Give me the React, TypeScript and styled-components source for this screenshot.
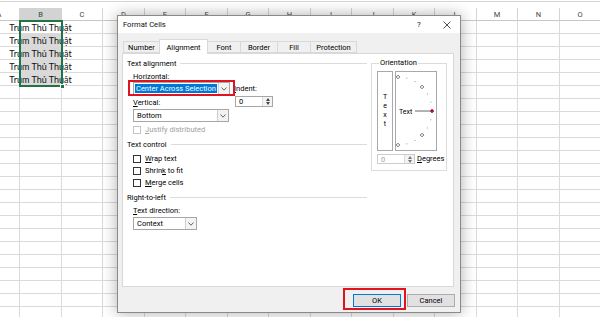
import React from 'react';
import styled, { createGlobalStyle } from 'styled-components';

const Global = createGlobalStyle`
  html, body { margin: 0; padding: 0; background: #fff; }
  body { width: 600px; height: 317px; overflow: hidden; }
  #root { width: 600px; height: 317px; }
  * { box-sizing: border-box; }
`;

const UI = `"Roboto", "Noto Sans", sans-serif`;
const CELLFONT = `"Lato", "Liberation Sans", sans-serif`;

const widths = [41, 42, 41, 42, 41, 42, 41, 42, 41, 42, 41, 42, 41, 42, 41];
const letters = 'ABCDEFGHIJKLMNO'.split('');
const ROWS = 23;

const Screen = styled.div`
  position: relative;
  width: 600px;
  height: 317px;
  overflow: hidden;
  background: #fff;
  font-family: ${UI};
`;

const TopStrip = styled.div`
  height: 8px;
  background: linear-gradient(#fff 0 1px, #d6d6d6 1px 2px, #fff 2px);
`;

const Sheet = styled.div`
  display: grid;
  grid-template-columns: ${widths.map((w) => `${w}px`).join(' ')};
  grid-auto-rows: 13px;
  margin-left: -21px;
`;

const HeaderCell = styled.div<{ $sel?: boolean }>`
  display: flex;
  align-items: center;
  justify-content: center;
  font-family: ${UI};
  font-size: 7.5px;
  color: ${(p) => (p.$sel ? '#1d4f30' : '#444')};
  background: ${(p) => (p.$sel ? '#d3d3d3' : '#fff')};
  border-right: 1px solid #d4d4d4;
  border-bottom: ${(p) => (p.$sel ? '1px solid #217346' : '1px solid #c6c6c6')};
`;

const Cell = styled.div<{ $sel?: boolean }>`
  position: relative;
  display: flex;
  align-items: center;
  justify-content: center;
  white-space: nowrap;
  font-family: ${CELLFONT};
  font-size: 9px;
  color: #111;
  background: ${(p) => (p.$sel ? '#d9d9d9' : 'transparent')};
  border-right: 1px solid #dadada;
  border-bottom: 1px solid #dadada;
`;

const Selection = styled.div`
  position: absolute;
  left: -1px;
  top: -1px;
  width: 44px;
  height: 67px;
  border: 2px solid #217346;
  pointer-events: none;
  z-index: 2;
`;

const FillHandle = styled.span`
  position: absolute;
  right: -4px;
  bottom: -4px;
  width: 5px;
  height: 5px;
  background: #217346;
  border: 1px solid #fff;
`;

/* ---------- Dialog ---------- */

const Dialog = styled.div`
  position: absolute;
  left: 117px;
  top: 15px;
  width: 344px;
  height: 298px;
  background: #f0f0f0;
  border: 1px solid #8a8a8a;
  box-shadow: 0 0 14px rgba(0, 0, 0, 0.32);
  display: flex;
  flex-direction: column;
  font-family: ${UI};
  font-size: 7.5px;
  color: #000;
`;

const TitleBar = styled.div`
  height: 17px;
  background: #fff;
  display: flex;
  align-items: center;
  padding: 0 6px 0 5px;
`;

const Title = styled.span`
  flex: 1;
  font-size: 7.6px;
  color: #111;
`;

const TitleBtn = styled.span<{ $w: number }>`
  width: ${(p) => p.$w}px;
  display: flex;
  align-items: center;
  justify-content: center;
  font-size: 8px;
  color: #222;
`;

const Body = styled.div`
  flex: 1;
  display: flex;
  flex-direction: column;
  padding: 6px 6px 0 4px;
`;

const TabRow = styled.div`
  height: 14px;
  display: flex;
  align-items: flex-end;
  padding-left: 1px;
  position: relative;
  z-index: 1;
`;

const Tab = styled.div<{ $w: number; $active?: boolean }>`
  width: ${(p) => p.$w}px;
  height: ${(p) => (p.$active ? 15 : 12)}px;
  margin-bottom: ${(p) => (p.$active ? -1 : 0)}px;
  display: flex;
  align-items: center;
  justify-content: center;
  background: ${(p) => (p.$active ? '#fff' : '#f0f0f0')};
  border: 1px solid #d9d9d9;
  border-bottom: ${(p) => (p.$active ? 'none' : '1px solid #d9d9d9')};
  margin-right: -1px;
  font-size: 7.5px;
`;

const Panel = styled.div`
  height: 234px;
  background: #fff;
  border: 1px solid #d9d9d9;
  display: flex;
  gap: 4px;
  padding: 4px 0 0 4px;
`;

const LeftCol = styled.div`
  width: 240px;
  display: grid;
  grid-template-rows: 10px 14px 13px 13px 14px 15px 15px 13px 12px 12px 16px 12px 13px;
`;

const GroupHeader = styled.div`
  display: flex;
  align-items: center;
  white-space: nowrap;
`;

const GroupLine = styled.span`
  flex: 1;
  height: 1px;
  background: #dcdcdc;
  margin-left: 4px;
`;

const Line = styled.div<{ $align?: string }>`
  display: flex;
  align-items: ${(p) => p.$align || 'center'};
  padding-left: 6px;
  white-space: nowrap;
`;

const Label = styled.span<{ $w?: number; $disabled?: boolean; $ml?: number }>`
  ${(p) => (p.$w ? `flex: 0 0 ${p.$w}px;` : '')}
  margin-left: ${(p) => p.$ml || 0}px;
  color: ${(p) => (p.$disabled ? '#a0a0a0' : '#000')};
  line-height: 10px;
`;

const ComboWrap = styled.div`
  position: relative;
  display: flex;
`;

const ComboBox = styled.div<{ $w: number }>`
  width: ${(p) => p.$w}px;
  height: 13px;
  border: 1px solid #a6a6a6;
  background: #fff;
  display: flex;
`;

const ComboText = styled.span<{ $hl?: boolean }>`
  flex: 1;
  display: flex;
  align-items: center;
  margin: 1px;
  padding-left: ${(p) => (p.$hl ? 1 : 2)}px;
  background: ${(p) => (p.$hl ? '#0078d7' : 'transparent')};
  color: ${(p) => (p.$hl ? '#fff' : '#000')};
`;

const ComboArrow = styled.span`
  width: 11px;
  border-left: 1px solid #cfcfcf;
  background: #f3f3f3;
  display: flex;
  align-items: center;
  justify-content: center;
`;

const RedMark = styled.span<{ $l: number; $t: number; $w: number; $h: number }>`
  position: absolute;
  left: ${(p) => p.$l}px;
  top: ${(p) => p.$t}px;
  width: ${(p) => p.$w}px;
  height: ${(p) => p.$h}px;
  border: 2px solid #e0141e;
  pointer-events: none;
  z-index: 3;
`;

const Spinner = styled.div<{ $disabled?: boolean }>`
  width: 38px;
  height: ${(p) => (p.$disabled ? 10 : 11)}px;
  border: 1px solid ${(p) => (p.$disabled ? '#cccccc' : '#a6a6a6')};
  background: #fff;
  display: flex;
  color: ${(p) => (p.$disabled ? '#a0a0a0' : '#000')};
`;

const SpinField = styled.span`
  flex: 1;
  display: flex;
  align-items: center;
  padding-left: 3px;
`;

const SpinButtons = styled.span`
  width: 10px;
  display: flex;
  flex-direction: column;
  border-left: 1px solid #dcdcdc;
`;

const SpinHalf = styled.span`
  flex: 1;
  display: flex;
  align-items: center;
  justify-content: center;
  background: #f3f3f3;
`;

const CheckBox = styled.span<{ $disabled?: boolean }>`
  width: 8px;
  height: 8px;
  border: 1px solid ${(p) => (p.$disabled ? '#c4c4c4' : '#333')};
  background: #fff;
  margin-right: 4px;
  flex: 0 0 8px;
`;

const Orientation = styled.fieldset`
  width: 76px;
  height: 113px;
  margin: 0;
  padding: 3px 0 0 5px;
  border: 1px solid #dcdcdc;
  min-width: 0;
  & > legend {
    padding: 0 1px;
    margin-left: 2px;
    line-height: 10px;
    font-size: 7.5px;
  }
`;

const OrientRow = styled.div`
  display: flex;
  gap: 2px;
`;

const VertTextBox = styled.div`
  width: 16px;
  height: 80px;
  border: 1px solid #a9a9a9;
  display: flex;
  flex-direction: column;
  align-items: center;
  justify-content: center;
  line-height: 9px;
  font-size: 7px;
`;

const DialBox = styled.div`
  width: 42px;
  height: 80px;
  border: 1px solid #a9a9a9;
  display: flex;
`;

const DegreesRow = styled.div`
  display: flex;
  align-items: center;
  margin-top: 3px;
  gap: 2px;
`;

const Footer = styled.div`
  flex: 1;
  display: flex;
  justify-content: flex-end;
  align-items: flex-start;
  gap: 6px;
  padding: 7px 5px 0 0;
  margin-right: -6px;
`;

const Button = styled.button<{ $default?: boolean }>`
  position: relative;
  width: 48px;
  height: 13px;
  padding: 0;
  font-family: ${UI};
  font-size: 7.5px;
  color: #000;
  background: #e1e1e1;
  border: 1px solid ${(p) => (p.$default ? '#0078d7' : '#adadad')};
  display: flex;
  align-items: center;
  justify-content: center;
`;

const Chevron = () => (
  <svg width="6" height="4" viewBox="0 0 6 4">
    <polyline points="0.5,0.5 3,3.2 5.5,0.5" fill="none" stroke="#555" strokeWidth="0.9" />
  </svg>
);

const Tri = ({ up, color = '#444' }: { up?: boolean; color?: string }) => (
  <svg width="4" height="3" viewBox="0 0 4 3">
    <polygon points={up ? '0,3 4,3 2,0' : '0,0 4,0 2,3'} fill={color} />
  </svg>
);

const CloseIcon = () => (
  <svg width="8" height="8" viewBox="0 0 8 8">
    <path d="M0.5 0.5 L7.5 7.5 M7.5 0.5 L0.5 7.5" stroke="#222" strokeWidth="0.8" />
  </svg>
);

const Dial = () => {
  const cx = 2;
  const cy = 39;
  const r = 34;
  const pt = (deg: number) => {
    const a = (deg * Math.PI) / 180;
    return [cx + r * Math.cos(a), cy - r * Math.sin(a)];
  };
  const diamond = (x: number, y: number, s: number) =>
    `${x},${y - s} ${x + s},${y} ${x},${y + s} ${x - s},${y}`;
  return (
    <svg width="40" height="78" viewBox="0 0 40 78">
      {[75, 60, 30, 15, -15, -30, -60, -75].map((d) => {
        const [x, y] = pt(d);
        return <rect key={d} x={x - 0.5} y={y - 0.5} width="1" height="1" fill="#9a9a9a" />;
      })}
      {[90, 45, -45, -90].map((d) => {
        const [x, y] = pt(d);
        return <polygon key={d} points={diamond(x, y, 1.8)} fill="#fff" stroke="#333" strokeWidth="0.7" />;
      })}
      <text x="3" y="41.6" fontSize="7" fontFamily="Roboto, sans-serif" fill="#000">
        Text
      </text>
      <line x1="19" y1="39" x2="34" y2="39" stroke="#666" strokeWidth="1" />
      <polygon points={diamond(36, 39, 2)} fill="#b0142a" stroke="#8a0f20" strokeWidth="0.5" />
    </svg>
  );
};

export default function App() {
  const tabs = [
    { t: 'Number', w: 37 },
    { t: 'Alignment', w: 49, active: true },
    { t: 'Font', w: 34 },
    { t: 'Border', w: 38 },
    { t: 'Fill', w: 34 },
    { t: 'Protection', w: 47 },
  ];

  const cells: React.ReactNode[] = [];
  letters.forEach((l, j) => {
    cells.push(
      <HeaderCell key={`h${j}`} $sel={j === 1}>
        {l}
      </HeaderCell>
    );
  });
  for (let i = 0; i < ROWS; i++) {
    letters.forEach((_, j) => {
      const inB = j === 1 && i < 5;
      cells.push(
        <Cell key={`c${i}-${j}`} $sel={j === 1 && i >= 1 && i <= 4}>
          {inB ? 'Trum Thủ Thuật' : null}
          {j === 1 && i === 0 ? (
            <Selection>
              <FillHandle />
            </Selection>
          ) : null}
        </Cell>
      );
    });
  }

  return (
    <Screen>
      <Global />
      <TopStrip />
      <Sheet>{cells}</Sheet>

      <Dialog>
        <TitleBar>
          <Title>Format Cells</Title>
          <TitleBtn $w={14}>?</TitleBtn>
          <TitleBtn $w={14} style={{ marginLeft: 14 }}>
            <CloseIcon />
          </TitleBtn>
        </TitleBar>
        <Body>
          <TabRow>
            {tabs.map((t) => (
              <Tab key={t.t} $w={t.w} $active={t.active}>
                {t.t}
              </Tab>
            ))}
          </TabRow>
          <Panel>
            <LeftCol>
              <GroupHeader>
                Text alignment
                <GroupLine />
              </GroupHeader>
              <Line $align="flex-end">
                <Label>
                  <u>H</u>orizontal:
                </Label>
              </Line>
              <Line>
                <ComboWrap>
                  <ComboBox $w={97}>
                    <ComboText $hl>Center Across Selection</ComboText>
                    <ComboArrow>
                      <Chevron />
                    </ComboArrow>
                  </ComboBox>
                  <RedMark $l={-5} $t={-2} $w={107} $h={16} />
                </ComboWrap>
                <Label $ml={4}>
                  <u>I</u>ndent:
                </Label>
              </Line>
              <Line $align="flex-start">
                <Label $w={102} style={{ marginTop: 3 }}>
                  <u>V</u>ertical:
                </Label>
                <Spinner style={{ marginTop: 1 }}>
                  <SpinField>0</SpinField>
                  <SpinButtons>
                    <SpinHalf>
                      <Tri up />
                    </SpinHalf>
                    <SpinHalf>
                      <Tri />
                    </SpinHalf>
                  </SpinButtons>
                </Spinner>
              </Line>
              <Line $align="flex-end">
                <ComboBox $w={96}>
                  <ComboText>Bottom</ComboText>
                  <ComboArrow>
                    <Chevron />
                  </ComboArrow>
                </ComboBox>
              </Line>
              <Line>
                <CheckBox $disabled />
                <Label $disabled>
                  <u>J</u>ustify distributed
                </Label>
              </Line>
              <GroupHeader>
                Text control
                <GroupLine />
              </GroupHeader>
              <Line>
                <CheckBox />
                <Label>
                  <u>W</u>rap text
                </Label>
              </Line>
              <Line>
                <CheckBox />
                <Label>
                  Shrin<u>k</u> to fit
                </Label>
              </Line>
              <Line>
                <CheckBox />
                <Label>
                  <u>M</u>erge cells
                </Label>
              </Line>
              <GroupHeader>
                Right-to-left
                <GroupLine />
              </GroupHeader>
              <Line>
                <Label>
                  <u>T</u>ext direction:
                </Label>
              </Line>
              <Line>
                <ComboBox $w={64}>
                  <ComboText>Context</ComboText>
                  <ComboArrow>
                    <Chevron />
                  </ComboArrow>
                </ComboBox>
              </Line>
            </LeftCol>

            <Orientation>
              <legend>Orientation</legend>
              <OrientRow>
                <VertTextBox>
                  <span>T</span>
                  <span>e</span>
                  <span>x</span>
                  <span>t</span>
                </VertTextBox>
                <DialBox>
                  <Dial />
                </DialBox>
              </OrientRow>
              <DegreesRow>
                <Spinner $disabled>
                  <SpinField>0</SpinField>
                  <SpinButtons>
                    <SpinHalf>
                      <Tri up color="#777" />
                    </SpinHalf>
                    <SpinHalf>
                      <Tri color="#777" />
                    </SpinHalf>
                  </SpinButtons>
                </Spinner>
                <Label>
                  <u>D</u>egrees
                </Label>
              </DegreesRow>
            </Orientation>
          </Panel>
          <Footer>
            <Button $default>
              OK
              <RedMark $l={-11} $t={-7} $w={63} $h={22} />
            </Button>
            <Button>Cancel</Button>
          </Footer>
        </Body>
      </Dialog>
    </Screen>
  );
}
